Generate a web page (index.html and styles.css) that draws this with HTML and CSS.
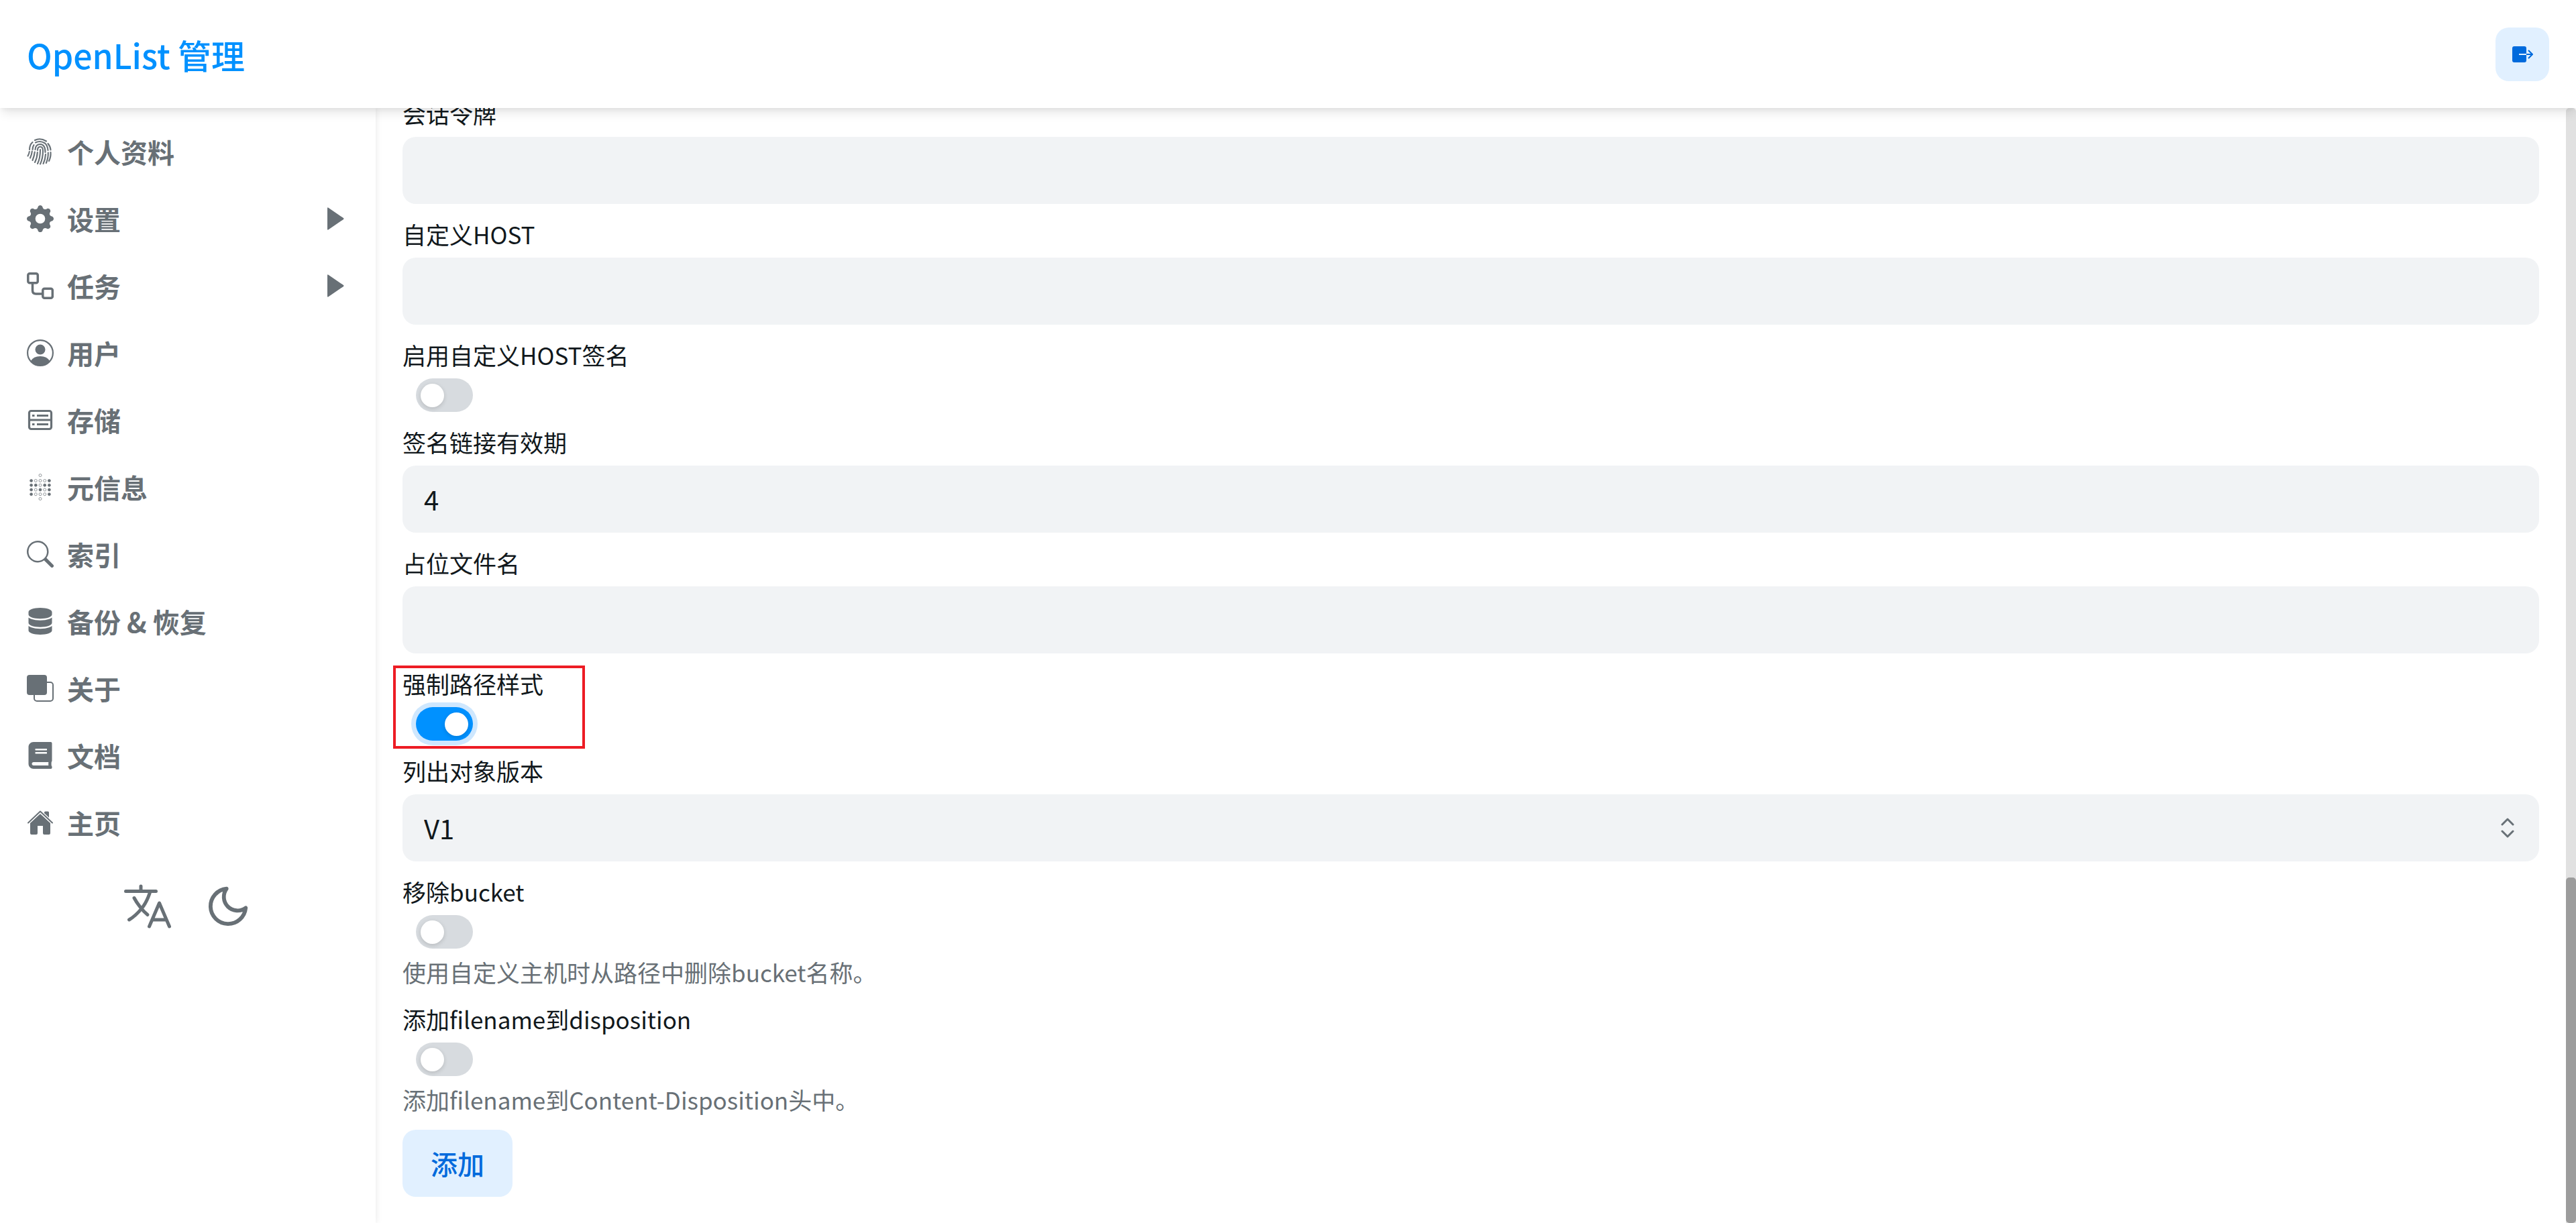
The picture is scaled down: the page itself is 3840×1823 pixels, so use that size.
FILE: index.html
```html
<!DOCTYPE html>
<html lang="zh-CN">

<head>
    <meta charset="UTF-8">
    <meta name="viewport" content="width=device-width, initial-scale=1.0">
    <title>OpenList 管理</title>
    <link rel="stylesheet" href="styles.css">
</head>

<body>
    <header class="header">
        <h1 class="brand">OpenList 管理</h1>
        <button class="logout" type="button" aria-label="退出登录">
            <svg viewBox="0 0 32 26" width="32" height="26">
                <rect x="1" y="1" width="21" height="24" rx="3" fill="currentColor" />
                <path d="M11 13h12" stroke="#e1f0ff" stroke-width="2" />
                <path d="M22 13h9M25 7l6 6-6 6" fill="none" stroke="currentColor" stroke-width="2" />
            </svg>
        </button>
    </header>

    <div class="layout">
        <nav class="sidebar">
            <ul class="menu">
                <li><a href="#" class="menu-item">
                    <svg class="icon" viewBox="0 0 40 40" fill="none" stroke="currentColor" stroke-width="2.1" stroke-linecap="round">
                        <path d="M12 3Q20-1 29 4.500M4 17Q4 10 8.500 6M31.500 8Q35 12 35.500 17.500" />
                        <path d="M13 6.500Q20 3 27 7.500Q31 11 31.500 18M8.500 17Q8.500 13 10.500 10" />
                        <path d="M12.500 17Q13 9 20 9Q27.500 9.500 27.500 21M16 18Q16 12.800 20 12.800Q24 12.800 24 19Q24 30 20 38.500M20 17Q20 30 16 38" />
                        <path d="M15.800 21Q15.500 29 12 36M11.800 20.500Q11 27 8.500 33M7.800 19.500Q7.500 24 5 29.500M3.800 20Q3.500 23 1.500 26.500" />
                        <path d="M28 24Q27.500 32 24.500 38M31.800 21.500Q32 30 28.800 37M35.500 21Q36 28 33 34" />
                    </svg>
                    <span>个人资料</span></a></li>
                <li><a href="#" class="menu-item">
                    <svg class="icon" viewBox="0 0 16 16" fill="currentColor">
                        <path d="M9.405 1.05c-.413-1.4-2.397-1.4-2.81 0l-.1.34a1.464 1.464 0 0 1-2.105.872l-.31-.17c-1.283-.698-2.686.705-1.987 1.987l.169.311c.446.82.023 1.841-.872 2.105l-.34.1c-1.4.413-1.4 2.397 0 2.81l.34.1a1.464 1.464 0 0 1 .872 2.105l-.17.31c-.698 1.283.705 2.686 1.987 1.987l.311-.169a1.464 1.464 0 0 1 2.105.872l.1.34c.413 1.4 2.397 1.4 2.81 0l.1-.34a1.464 1.464 0 0 1 2.105-.872l.31.17c1.283.698 2.686-.705 1.987-1.987l-.169-.311a1.464 1.464 0 0 1 .872-2.105l.34-.1c1.4-.413 1.4-2.397 0-2.81l-.34-.1a1.464 1.464 0 0 1-.872-2.105l.17-.31c.698-1.283-.705-2.686-1.987-1.987l-.311.169a1.464 1.464 0 0 1-2.105-.872l-.1-.34zM8 10.93a2.929 2.929 0 1 1 0-5.86 2.929 2.929 0 0 1 0 5.858z" />
                    </svg>
                    <span>设置</span>
                    <svg class="arrow" viewBox="0 0 26 34" fill="currentColor"><path d="M1 1.500Q1-.5 3 1L25 16Q26 17 25 18L3 33Q1 34.500 1 32.500z" /></svg></a></li>
                <li><a href="#" class="menu-item">
                    <svg class="icon" viewBox="0 0 40 40" fill="none" stroke="currentColor" stroke-width="3.5">
                        <rect x="1.8" y="1.8" width="14.500" height="14" rx="2.500" />
                        <rect x="23.800" y="24.300" width="14.500" height="14" rx="2.500" />
                        <path d="M8.500 16v11q0 5 5 5H23" />
                    </svg>
                    <span>任务</span>
                    <svg class="arrow" viewBox="0 0 26 34" fill="currentColor"><path d="M1 1.500Q1-.5 3 1L25 16Q26 17 25 18L3 33Q1 34.500 1 32.500z" /></svg></a></li>
                <li><a href="#" class="menu-item">
                    <svg class="icon" viewBox="0 0 40 40" fill="currentColor">
                        <circle cx="20" cy="20" r="18.900" fill="none" stroke="currentColor" stroke-width="2.200" />
                        <circle cx="20" cy="15" r="7.500" />
                        <path d="M6 32Q10 25 20 25T34 32Q29 39 20 39T6 32z" />
                    </svg>
                    <span>用户</span></a></li>
                <li><a href="#" class="menu-item">
                    <svg class="icon" viewBox="0 0 40 40" fill="none" stroke="currentColor" stroke-width="3.200">
                        <rect x="3.500" y="6.500" width="33" height="27" rx="3" />
                        <path d="M3 20h34M8 13.500h3.500M15 13.500h17M8 26.500h3.500M15 26.500h17" />
                    </svg>
                    <span>存储</span></a></li>
                <li><a href="#" class="menu-item">
                    <svg class="icon" viewBox="0 0 40 40" fill="none" stroke="currentColor">
                        <g stroke-width="0.7">
                            <circle cx="20" cy="2.500" r="2" /><circle cx="20" cy="37.500" r="2" />
                            <circle cx="13.300" cy="10.500" r="2" /><circle cx="20" cy="10.500" r="2" /><circle cx="26.700" cy="10.500" r="2" />
                            <circle cx="20" cy="17.200" r="2" />
                            <circle cx="13.300" cy="24" r="2" /><circle cx="26.700" cy="24" r="2" />
                            <circle cx="13.300" cy="30.700" r="2" /><circle cx="20" cy="30.700" r="2" /><circle cx="26.700" cy="30.700" r="2" />
                        </g>
                        <g stroke-width="0.7" fill="currentColor">
                            <circle cx="6.600" cy="10.500" r="2" /><circle cx="33.400" cy="10.500" r="2" />
                            <circle cx="6.600" cy="17.200" r="2" /><circle cx="13.300" cy="17.200" r="2" /><circle cx="26.700" cy="17.200" r="2" /><circle cx="33.400" cy="17.200" r="2" />
                            <circle cx="6.600" cy="24" r="2" /><circle cx="20" cy="24" r="2" /><circle cx="33.400" cy="24" r="2" />
                            <circle cx="6.600" cy="30.700" r="2" /><circle cx="33.400" cy="30.700" r="2" />
                        </g>
                    </svg>
                    <span>元信息</span></a></li>
                <li><a href="#" class="menu-item">
                    <svg class="icon" viewBox="0 0 16 16" fill="currentColor">
                        <path d="M11.742 10.344a6.500 6.500 0 1 0-1.397 1.398h-.001c.03.04.062.078.098.115l3.850 3.850a1 1 0 0 0 1.415-1.414l-3.850-3.850a1.007 1.007 0 0 0-.115-.1zM12 6.500a5.500 5.500 0 1 1-11 0 5.500 5.500 0 0 1 11 0z" />
                    </svg>
                    <span>索引</span></a></li>
                <li><a href="#" class="menu-item">
                    <svg class="icon" viewBox="0 0 448 512" fill="currentColor">
                        <path d="M448 80v48c0 44.200-100.300 80-224 80S0 172.200 0 128V80C0 35.800 100.300 0 224 0S448 35.800 448 80zM393.200 214.700c20.800-7.400 39.900-16.900 54.800-28.600V288c0 44.200-100.300 80-224 80S0 332.200 0 288V186.100c14.900 11.800 34 21.200 54.800 28.600C99.700 230.700 159.500 240 224 240s124.300-9.300 169.200-25.300zM0 346.100c14.900 11.800 34 21.200 54.800 28.600C99.700 390.700 159.500 400 224 400s124.300-9.300 169.200-25.300c20.800-7.400 39.900-16.900 54.800-28.600V432c0 44.200-100.300 80-224 80S0 476.200 0 432V346.100z" />
                    </svg>
                    <span>备份 &amp; 恢复</span></a></li>
                <li><a href="#" class="menu-item">
                    <svg class="icon" viewBox="0 0 40 40" fill="none" stroke="currentColor" stroke-width="2">
                        <rect x="11" y="11" width="28" height="28" rx="4" />
                        <rect x="0" y="0" width="30" height="30" rx="4" fill="currentColor" stroke="none" />
                    </svg>
                    <span>关于</span></a></li>
                <li><a href="#" class="menu-item">
                    <svg class="icon" viewBox="0 0 448 512" fill="currentColor">
                        <path d="M448 360V24c0-13.300-10.700-24-24-24H96C43 0 0 43 0 96v320c0 53 43 96 96 96h328c13.300 0 24-10.700 24-24v-16c0-7.500-3.500-14.300-8.900-18.700-4.200-15.400-4.200-59.300 0-74.700 5.400-4.300 8.900-11.100 8.900-18.600zM128 134c0-3.300 2.700-6 6-6h212c3.300 0 6 2.700 6 6v20c0 3.300-2.700 6-6 6H134c-3.300 0-6-2.700-6-6v-20zm0 64c0-3.300 2.700-6 6-6h212c3.300 0 6 2.700 6 6v20c0 3.300-2.700 6-6 6H134c-3.300 0-6-2.700-6-6v-20zm253.400 250H96c-17.700 0-32-14.300-32-32 0-17.600 14.400-32 32-32h285.400c-1.900 17.100-1.900 46.900 0 64z" />
                    </svg>
                    <span>文档</span></a></li>
                <li><a href="#" class="menu-item">
                    <svg class="icon" viewBox="0 0 40 40" fill="currentColor">
                        <path d="M5 20.500L20 7l15 13.500V36q0 2-2 2h-7q-2 0-2-2V25h-8v11q0 2-2 2H7q-2 0-2-2z" />
                        <path d="M26 5q0-1.500 1.500-1.500h4Q33 3.500 33 5v10l-7-6.500z" />
                        <path d="M2 20.500L20 3.500l18 17" fill="none" stroke="#ffffff" stroke-width="4.500" />
                        <path d="M2 20.500L20 3.500l18 17" fill="none" stroke="currentColor" stroke-width="2" stroke-linecap="round" stroke-linejoin="round" />
                    </svg>
                    <span>主页</span></a></li>
            </ul>
            <div class="tools">
                <button class="tool" type="button" aria-label="切换语言">
                    <svg viewBox="0 0 512 512" width="80" height="80" fill="none" stroke="currentColor" stroke-width="32" stroke-linecap="round" stroke-linejoin="round">
                        <path d="M48 112h288M192 64v48M272 448l96-224 96 224M301.500 384h133M281.300 112S257 206 199 277 80 384 80 384M256 336s-35-27-72-75-56-85-56-85" />
                    </svg>
                </button>
                <button class="tool" type="button" aria-label="切换主题">
                    <svg viewBox="0 0 24 24" width="70" height="70" fill="none" stroke="currentColor" stroke-width="2" stroke-linecap="round" stroke-linejoin="round">
                        <path d="M21 12.790A9 9 0 1 1 11.210 3 7 7 0 0 0 21 12.790z" />
                    </svg>
                </button>
            </div>
        </nav>

        <main class="content">
            <form class="form">
                <div class="field">
                    <label for="session_token">会话令牌</label>
                    <input type="text" id="session_token" class="input">
                </div>
                <div class="field">
                    <label for="custom_host">自定义HOST</label>
                    <input type="text" id="custom_host" class="input">
                </div>
                <div class="field">
                    <label for="enable_custom_host">启用自定义HOST签名</label>
                    <input type="checkbox" id="enable_custom_host" class="switch">
                </div>
                <div class="field">
                    <label for="sign_url_expire">签名链接有效期</label>
                    <input type="text" id="sign_url_expire" class="input" value="4">
                </div>
                <div class="field">
                    <label for="placeholder_name">占位文件名</label>
                    <input type="text" id="placeholder_name" class="input">
                </div>
                <div class="field marked">
                    <label for="force_path_style">强制路径样式</label>
                    <input type="checkbox" id="force_path_style" class="switch active" checked>
                </div>
                <div class="field">
                    <label for="list_version">列出对象版本</label>
                    <div class="select-wrap">
                        <select id="list_version" class="input">
                            <option>V1</option>
                            <option>V2</option>
                        </select>
                        <svg class="select-icon" viewBox="0 0 20 32" fill="none" stroke="currentColor" stroke-width="3" stroke-linecap="round" stroke-linejoin="round">
                            <path d="M2 11l8-8 8 8M2 21l8 8 8-8" />
                        </svg>
                    </div>
                </div>
                <div class="field">
                    <label for="remove_bucket">移除bucket</label>
                    <input type="checkbox" id="remove_bucket" class="switch">
                    <p class="help">使用自定义主机时从路径中删除bucket名称。</p>
                </div>
                <div class="field">
                    <label for="add_filename">添加filename到disposition</label>
                    <input type="checkbox" id="add_filename" class="switch">
                    <p class="help">添加filename到Content-Disposition头中。</p>
                </div>
                <button class="button" type="submit">添加</button>
            </form>
        </main>

        <div class="scrollbar">
            <div class="scrollbar-thumb"></div>
        </div>
    </div>
</body>

</html>
```
FILE: styles.css
```css
*,
*::before,
*::after {
    box-sizing: border-box;
}

body {
    margin: 0;
    min-height: 100vh;
    display: flex;
    flex-direction: column;
    font-family: "Noto Sans CJK SC", sans-serif;
    font-size: 40px;
    color: #11181c;
    background-color: #fff;
}

h1,
p,
ul {
    margin: 0;
    padding: 0;
}

button,
input,
select {
    font: inherit;
    color: inherit;
    border: none;
}

.header {
    position: sticky;
    top: 0;
    z-index: 2;
    display: flex;
    align-items: center;
    justify-content: space-between;
    height: 161px;
    padding: 0 40px;
    background-color: #fff;
    box-shadow: 0 10px 15px -3px rgba(0, 0, 0, 0.1), 0 4px 6px -2px rgba(0, 0, 0, 0.05);
}

.brand {
    font-size: 50px;
    font-weight: 500;
    line-height: 70px;
    color: #0091ff;
}

.logout {
    display: flex;
    align-items: center;
    justify-content: center;
    width: 80px;
    height: 80px;
    border-radius: 20px;
    color: #006adc;
    background-color: #e1f0ff;
}

.layout {
    flex: 1;
    display: flex;
}

/* Sidebar */
.sidebar {
    flex-shrink: 0;
    width: 560px;
    padding: 15px 0;
    color: #687076;
    box-shadow: 0 0 10px rgba(0, 0, 0, 0.1);
}

.menu {
    list-style: none;
}

.menu-item {
    display: flex;
    align-items: center;
    gap: 20px;
    height: 100px;
    padding: 0 47px 0 40px;
    font-weight: 700;
    line-height: 60px;
    color: inherit;
    text-decoration: none;
}

.icon {
    width: 40px;
    height: 40px;
}

.arrow {
    width: 26px;
    height: 34px;
    margin-left: auto;
}

.tools {
    display: flex;
    align-items: center;
    justify-content: center;
    gap: 45px;
    padding: 35px 5px 0 0;
}

.tool {
    display: flex;
    padding: 0;
    background: none;
}

/* Form */
.content {
    flex: 1;
    /* scrolled slightly under the header */
    margin-top: -17px;
    padding: 0 40px;
}

.form {
    display: flex;
    flex-direction: column;
    align-items: flex-start;
    gap: 20px;
}

.field {
    position: relative;
    display: flex;
    flex-direction: column;
    align-items: flex-start;
    gap: 10px;
    width: 100%;
    font-size: 35px;
    line-height: 50px;
}

.input {
    appearance: none;
    display: block;
    width: 100%;
    height: 100px;
    padding: 0 32px;
    font-size: 40px;
    border-radius: 20px;
    background-color: #f1f3f5;
}

.select-wrap {
    position: relative;
    width: 100%;
}

.select-icon {
    position: absolute;
    top: 34px;
    right: 37px;
    width: 20px;
    height: 32px;
    color: #687076;
    pointer-events: none;
}

.switch {
    appearance: none;
    display: flex;
    align-items: center;
    width: 85px;
    height: 50px;
    margin: 0 20px;
    padding: 0 7px;
    border-radius: 25px;
    background-color: #d7dbdf;
}

.switch::before {
    content: "";
    width: 35px;
    height: 35px;
    border-radius: 50%;
    background-color: #fff;
    box-shadow: 0 2px 6px rgba(0, 0, 0, 0.15);
}

.switch:checked {
    justify-content: flex-end;
    background-color: #0091ff;
}

.switch.active {
    box-shadow: 0 0 0 7px #cee7fe;
}

/* Red frame around the setting to change */
.marked::after {
    content: "";
    position: absolute;
    top: -2px;
    left: -14px;
    width: 286px;
    height: 124px;
    border: 4px solid #ed1c24;
    pointer-events: none;
}

.help {
    color: #687076;
}

.button {
    height: 100px;
    padding: 0 42px;
    border-radius: 20px;
    font-weight: 500;
    color: #006adc;
    background-color: #e1f0ff;
}

/* Scrollbar */
.scrollbar {
    display: flex;
    flex-direction: column;
    justify-content: flex-end;
    width: 15px;
    border-radius: 5px 5px 0 0;
    background-color: #e1e1e1;
}

.scrollbar-thumb {
    height: 31%;
    border-radius: 5px;
    background-color: #9c9c9c;
}
```
